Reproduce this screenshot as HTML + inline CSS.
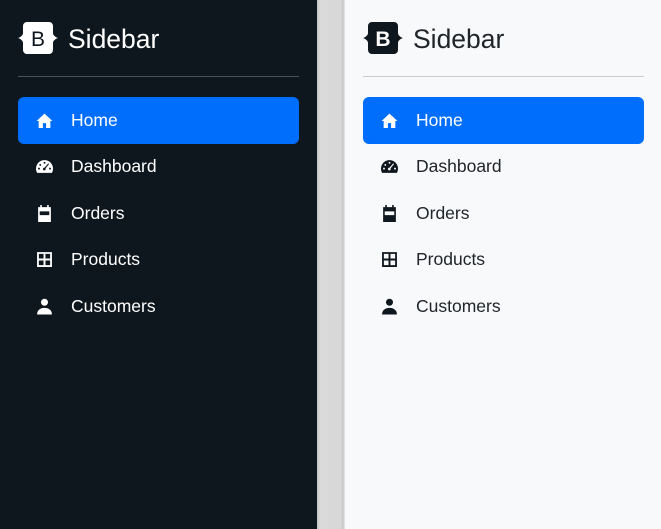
<!DOCTYPE html><html><head><style>
body{margin:0;width:661px;height:529px;overflow:hidden;font-family:"Liberation Sans",sans-serif;background:#f8f9fa;position:relative}
.p{position:absolute;top:0;height:529px}
.dark{left:0;width:317px;background:#0f171e;color:#fff}
.sep{left:317px;width:28px;background:linear-gradient(90deg,#c4c4c4 0,#dadada 3px,#d8d8d8 24px,#c8c8c8 26px,#e8e8e8 28px)}
.light{left:345px;width:316px;background:#f8f9fa;color:#212529}
.brand{position:absolute;left:18px;top:22px;height:32px;display:flex;align-items:center}
.brand span{font-size:26.5px;margin-left:10px;margin-top:2px}
hr{position:absolute;left:18px;width:281px;top:76px;margin:0;border:0;border-top:1px solid}
.dark hr{border-color:#4a5158}.light hr{border-color:#c9cbcd}
.nav{position:absolute;left:18px;top:97px;width:281px}
.it{height:46.5px;border-radius:6px;display:flex;align-items:center;padding-left:18px;font-size:17.5px}
.it svg{width:17px;height:17px;flex-shrink:0;margin-right:18px}
.act{background:#006efc;color:#fff}
</style></head><body>
<div class="p sep"></div>
<div class="p dark">
<div class="brand"><svg width="40" height="32" viewBox="0 0 40 32"><path d="M5 4a4 4 0 0 1 4-4h22a4 4 0 0 1 4 4v7c0 2 2 4 5 5c-3 1-5 3-5 5v7a4 4 0 0 1-4 4H9a4 4 0 0 1-4-4v-7c0-2-2-4-5-5c3-1 5-3 5-5z" fill="#fff"/><text x="20" y="24" text-anchor="middle" font-size="21" font-family="Liberation Sans" fill="#0f171e">B</text></svg><span>Sidebar</span></div>
<hr>
<div class="nav"></div></div>
<div class="p light">
<div class="brand"><svg width="40" height="32" viewBox="0 0 40 32"><path d="M5 4a4 4 0 0 1 4-4h22a4 4 0 0 1 4 4v7c0 2 2 4 5 5c-3 1-5 3-5 5v7a4 4 0 0 1-4 4H9a4 4 0 0 1-4-4v-7c0-2-2-4-5-5c3-1 5-3 5-5z" fill="#0f171e"/><text x="20" y="24" text-anchor="middle" font-size="21" font-weight="bold" font-family="Liberation Sans" fill="#fff">B</text></svg><span>Sidebar</span></div>
<hr>
<div class="nav"></div></div>
<script>
function items(c){return `
<div class="it act"><svg viewBox="0 0 16 16" fill="#fff"><path d="M8 1.5L0.5 8.5H2.5V15H6.5V10.5H9.5V15H13.5V8.5H15.5Z"/></svg>Home</div>
<div class="it"><svg viewBox="0 0 16 16" fill="${c}"><path d="M8 2a8 8 0 0 0-8 8c0 1.5.4 2.8 1 4h14c.6-1.2 1-2.5 1-4a8 8 0 0 0-8-8z"/><g fill="${c=='#fff'?'#0f171e':'#f8f9fa'}"><circle cx="8" cy="4.5" r=".9"/><circle cx="4" cy="6.5" r=".9"/><circle cx="2.8" cy="10" r=".9"/><circle cx="13.2" cy="10" r=".9"/><path d="M11.5 5l.8.6-3.3 4.2a1.3 1.3 0 1 1-.9-.7z"/></g></svg>Dashboard</div>
<div class="it"><svg viewBox="0 0 16 16" fill="${c}"><path d="M4 0h1.5v2h5V0H12v2h2v14H2V2h2zM3.5 6v3.5h9V6z"/></svg>Orders</div>
<div class="it"><svg viewBox="0 0 16 16" fill="${c}"><path d="M1 1h14v14H1zM2.7 2.7v4.4h4.4V2.7zm6.2 0v4.4h4.4V2.7zM2.7 8.9v4.4h4.4V8.9zm6.2 0v4.4h4.4V8.9z"/></svg>Products</div>
<div class="it"><svg viewBox="0 0 16 16" fill="${c}"><circle cx="8" cy="4" r="3.3"/><path d="M1 15.5c0-4 3-6.2 7-6.2s7 2.2 7 6.2z"/></svg>Customers</div>`}
document.querySelectorAll('.nav')[0].innerHTML=items('#fff');
document.querySelectorAll('.nav')[1].innerHTML=items('#0f171e');
</script>
</body></html>
